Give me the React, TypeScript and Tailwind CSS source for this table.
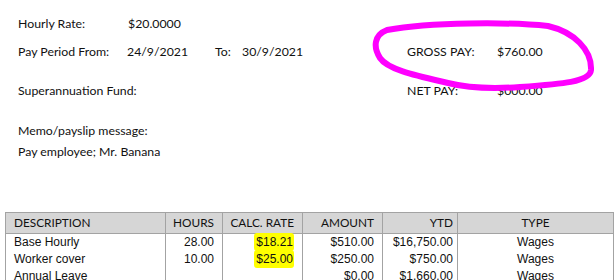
import React from 'react';

type PayLine = {
  description: string;
  hours: string;
  rate: string;
  amount: string;
  ytd: string;
  type: string;
};

const PAY_LINES: PayLine[] = [
  { description: 'Base Hourly', hours: '28.00', rate: '$18.21', amount: '$510.00', ytd: '$16,750.00', type: 'Wages' },
  { description: 'Worker cover', hours: '10.00', rate: '$25.00', amount: '$250.00', ytd: '$750.00', type: 'Wages' },
  { description: 'Annual Leave', hours: '', rate: '', amount: '$0.00', ytd: '$1,660.00', type: 'Wages' },
];

const uiFont = "font-['Lato','Noto_Sans',sans-serif]";
const bodyFont = "font-['Liberation_Sans',Arial,sans-serif]";

export default function App() {
  return (
    <div className={`relative h-[280px] w-[615px] overflow-hidden bg-white text-[12.3px] text-[#111] ${uiFont}`}>
      <div className="flex">
        <div className="w-[360px] pl-[18px]">
          <div className="flex h-[46px] items-center pt-[2px]">
            <span className="w-[110px]">Hourly Rate:</span>
            <span>$20.0000</span>
          </div>
          <div className="flex h-[12px] items-center">
            <span className="w-[109px]">Pay Period From:</span>
            <span className="w-[88px]">24/9/2021</span>
            <span className="w-[27px]">To:</span>
            <span>30/9/2021</span>
          </div>
          <div className="flex h-[66px] items-center">Superannuation Fund:</div>
          <div className="h-[14px] leading-[14px]">Memo/payslip message:</div>
          <div className="h-[28px] leading-[28px]">Pay employee; Mr. Banana</div>
        </div>

        <div className="pl-[47px] pt-[46px]">
          <div className="flex h-[12px] items-center">
            <span className="w-[90px]">GROSS PAY:</span>
            <span>$760.00</span>
          </div>
          <div className="flex h-[66px] items-center">
            <span className="w-[90px]">NET PAY:</span>
            <span>$000.00</span>
          </div>
        </div>
      </div>

      <svg className="pointer-events-none absolute left-0 top-0" width="615" height="120" viewBox="0 0 615 120">
        <path
          d="M387 30 C430 22 510 22 548 26 C574 32 592 50 591 70 C590 82 562 84 520 87 C492 89 468 88 448 83 C418 76 388 70 380 58 C373 47 374 35 387 30"
          fill="none"
          stroke="#ff00ff"
          strokeWidth="6"
          strokeLinecap="round"
        />
      </svg>

      <div className="mt-[46px] pl-[5px]">
        <table className="w-[608px] table-fixed border-collapse border border-[#a3a3a3]">
          <colgroup>
            <col className="w-[160px]" />
            <col className="w-[57px]" />
            <col className="w-[80px]" />
            <col className="w-[80px]" />
            <col className="w-[75px]" />
            <col className="w-[156px]" />
          </colgroup>
          <thead>
            <tr className="h-[21px] whitespace-nowrap bg-[#d6d6d6] text-[11.8px] leading-[20px]">
              <th className="border border-[#a3a3a3] pl-[8px] text-left font-normal">DESCRIPTION</th>
              <th className="border border-[#a3a3a3] pr-[8px] text-right font-normal">HOURS</th>
              <th className="border border-[#a3a3a3] pr-[8px] text-right font-normal">CALC. RATE</th>
              <th className="border border-[#a3a3a3] pr-[8px] text-right font-normal">AMOUNT</th>
              <th className="border border-[#a3a3a3] pr-[4px] text-right font-normal">YTD</th>
              <th className="border border-[#a3a3a3] text-center font-normal">TYPE</th>
            </tr>
          </thead>
          <tbody className={`text-[12px] ${bodyFont}`}>
            {PAY_LINES.map((line) => (
              <tr key={line.description} className="h-[17px] whitespace-nowrap leading-[17px]">
                <td className="border-x border-[#a3a3a3] pl-[8px] text-left">{line.description}</td>
                <td className="border-x border-[#a3a3a3] pr-[8px] text-right">{line.hours}</td>
                <td className="border-x border-[#a3a3a3] pr-[8px] text-right">
                  {line.rate ? (
                    <span className="rounded-[3px] bg-[#ffff00] py-[2px] pl-[2px] pr-[1px]">{line.rate}</span>
                  ) : null}
                </td>
                <td className="border-x border-[#a3a3a3] pr-[8px] text-right">{line.amount}</td>
                <td className="border-x border-[#a3a3a3] pr-[4px] text-right">{line.ytd}</td>
                <td className="border-x border-[#a3a3a3] text-center">{line.type}</td>
              </tr>
            ))}
          </tbody>
        </table>
      </div>
    </div>
  );
}
